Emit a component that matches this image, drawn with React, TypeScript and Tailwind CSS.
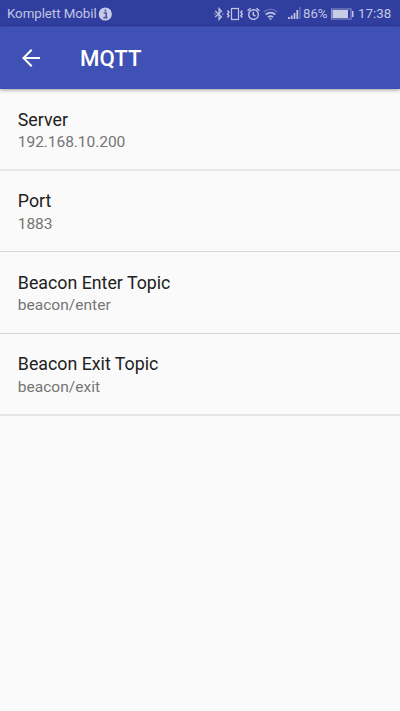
import React from "react";

const settings = [
  { title: "Server", value: "192.168.10.200", row: "h-[82px] border-b-2 border-[#e6e6e6] pt-[20px]", spacing: "tracking-[-0.07px]" },
  { title: "Port", value: "1883", row: "h-[81px] border-b border-[#d8d8d8] pt-[19px]", spacing: "pt-px tracking-[-0.1px]" },
  { title: "Beacon Enter Topic", value: "beacon/enter", row: "h-[82px] border-b border-[#d8d8d8] pt-[20px]", spacing: "" },
  { title: "Beacon Exit Topic", value: "beacon/exit", row: "h-[82px] border-b-2 border-[#e6e6e6] pt-[19px]", spacing: "pt-px" },
];

function StatusBar() {
  return (
    <div className="flex h-[26px] items-center bg-[#303f9f] pl-[7px] text-[13.3px] leading-[16px] text-[#c1c5e2]">
      <span className="w-[91px] whitespace-nowrap pt-[2px] text-[13.3px] tracking-[-0.05px]">Komplett Mobil</span>
      <svg className="mt-[1px] h-[14px] w-[14px] shrink-0" viewBox="0 0 14 14">
        <circle cx="7.3" cy="7" r="6.6" fill="#c8cce6" />
        <path d="M7.4 2.5v2M5.6 6h2.6v4.6M5.3 10.6h4.2" fill="none" stroke="#4a57a9" strokeWidth="1.7" />
      </svg>
      <svg className="ml-[102px] mt-[1px] h-[14px] w-[10px] shrink-0" viewBox="0 0 10 14" fill="none" stroke="#c1c5e2" strokeWidth="1.2">
        <path d="M1.2 4l6.3 5.7L5 12.5v-11l2.5 2.8L1.2 10" />
        <path d="M.3 7h1.2M8.2 7h1.2" />
      </svg>
      <svg className="ml-[2px] mt-[1px] h-[14px] w-[17px] shrink-0" viewBox="0 0 17 14" fill="none" stroke="#c1c5e2">
        <rect x="5.5" y="1.5" width="7" height="11" strokeWidth="1.2" />
        <path d="M1.5 3.5l1.4 1.7L1.5 7l1.4 1.8-1.4 1.7M16.3 3.5l-1.4 1.7L16.3 7l-1.4 1.8 1.4 1.7" strokeWidth="1.5" />
      </svg>
      <svg className="ml-[4px] mt-[1px] h-[14px] w-[13px] shrink-0" viewBox="0 0 13 14" fill="none" stroke="#c1c5e2" strokeWidth="1.4">
        <circle cx="6.5" cy="7.5" r="4.8" />
        <path d="M.6 3.8l3-2.5M9.4 1.3l3 2.5M6.3 4.8v3l2.2 1.4" />
      </svg>
      <svg className="ml-[3px] mt-[2px] h-[13px] w-[15px] shrink-0" viewBox="0 0 15 13" fill="none" stroke="#c1c5e2" strokeWidth="1.6">
        <path d="M.7 3.8q6.8-5.2 13.6 0" opacity=".35" />
        <path d="M2.7 6.5q4.8-3.8 9.6 0M4.9 9.1q2.6-2 5.2 0" />
        <path d="M5.8 10.2h3.4L7.5 12.2z" fill="#c1c5e2" stroke="none" />
      </svg>
      <svg className="ml-[10px] mt-[1px] h-[13px] w-[13px] shrink-0" viewBox="0 0 13 13" fill="#c1c5e2">
        <path d="M0 10h1.8v2H0zM2.8 8.5h1.8V12H2.8zM5.6 6h1.8v6H5.6zM8.4 3h1.8v9H8.4z" />
        <path d="M11.2 0h1.6v12h-1.6z" opacity=".35" />
      </svg>
      <span className="ml-[2px] w-[27px] whitespace-nowrap pt-[2px] text-[13.2px]">86%</span>
      <svg className="ml-[1px] mt-[1px] h-[12px] w-[23px] shrink-0" viewBox="0 0 23 12">
        <rect x=".5" y="1" width="19.5" height="10" fill="none" stroke="#8f98cb" />
        <rect x="1.5" y="2" width="15.5" height="8" fill="#c8cce6" />
        <rect x="21" y="3" width="1.5" height="6" fill="#c1c5e2" />
      </svg>
      <span className="ml-[4px] whitespace-nowrap pt-[2px] text-[13.3px]">17:38</span>
    </div>
  );
}

export default function App() {
  return (
    <div className="h-[711px] w-full overflow-hidden bg-[#fafafa] font-['Roboto','Liberation_Sans',sans-serif]">
      <StatusBar />
      <header className="relative flex h-[63px] items-center border-t border-[#3747a8] bg-[#3f51b5] text-white shadow-[0_1px_4px_rgba(0,0,0,0.38)]">
        <svg className="ml-[22px] h-[18px] w-[18px]" viewBox="0 0 18 18" fill="none" stroke="currentColor" strokeWidth="2">
          <path d="M18 9H2M9.7.8L1.5 9l8.2 8.2" />
        </svg>
        <h1 className="ml-[40px] text-[22.2px] font-medium leading-[26px]">MQTT</h1>
      </header>
      <main>
        {settings.map((item) => (
          <section key={item.title} className={`pl-[17.8px] ${item.row}`}>
            <h2 className="text-[17.8px] leading-[22px] text-[#212121]">{item.title}</h2>
            <p className={`text-[15.55px] leading-[22px] text-[#757575] ${item.spacing}`}>{item.value}</p>
          </section>
        ))}
      </main>
    </div>
  );
}
